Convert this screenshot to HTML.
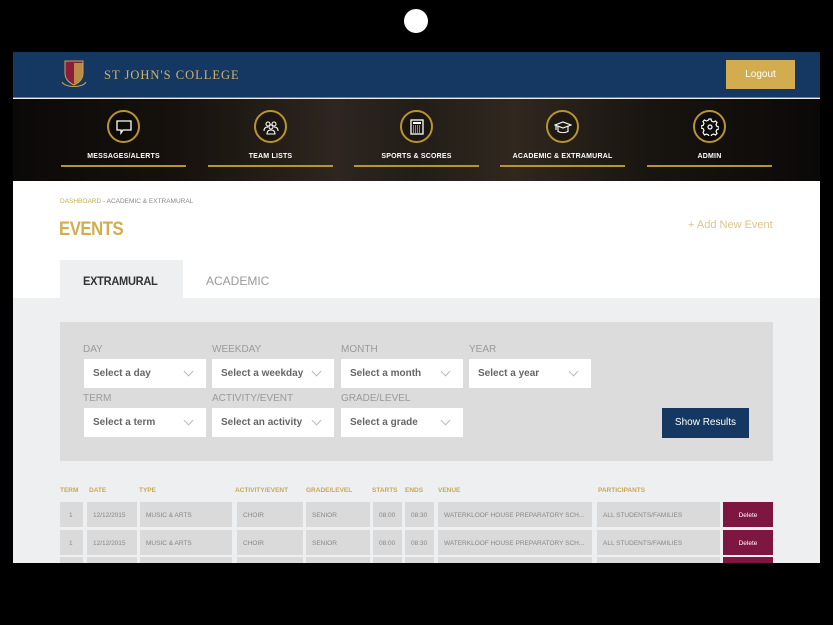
<!DOCTYPE html>
<html><head><meta charset="utf-8"><style>
*{margin:0;padding:0;box-sizing:border-box}
body{width:833px;height:625px;background:#000;position:relative;overflow:hidden;font-family:"Liberation Sans",sans-serif}
.a{position:absolute}
.screen{left:13px;top:52px;width:807px;height:511px;background:#eeeff1;overflow:hidden}
.hdr{left:0;top:0;width:807px;height:46px;background:#143861;border-bottom:1px solid #8a7a4a}
.nav{left:0;top:47px;width:807px;height:82px;background:linear-gradient(90deg,#0b0908 0%,#16110d 20%,#2e261f 40%,#221d18 50%,#30281f 62%,#17130f 80%,#0b0908 100%)}
.ni{position:absolute;top:0;width:125px;height:82px;text-align:center}
.ni .c{position:absolute;left:46px;top:11px;width:33px;height:33px;border:2px solid #b8952e;border-radius:50%;background:rgba(0,0,0,.25)}
.ni .c svg{position:absolute;left:6px;top:6px}
.ni .l{position:absolute;left:0;top:54px;width:125px;font-size:7px;font-weight:bold;color:#fff;letter-spacing:.2px}
.ni .u{position:absolute;left:0;top:66px;width:125px;height:2px;background:#b8952e}
.white{left:0;top:129px;width:807px;height:117px;background:#fff}
.lbl{font-size:10px;color:#9a9a9a}
.sel{position:absolute;width:122px;height:29px;background:#fff;font-size:10px;font-weight:bold;color:#666;padding:9px 0 0 9px}
.sel:after{content:"";position:absolute;right:14px;top:9px;width:6px;height:6px;border-right:1px solid #bbb;border-bottom:1px solid #bbb;transform:rotate(45deg)}
.th{position:absolute;top:435px;font-size:6.5px;color:#c9a94e;font-weight:bold}
.td{position:absolute;height:25px;background:#dadada;font-size:6.5px;color:#888;padding-top:10px;padding-left:6px;white-space:nowrap;overflow:hidden}
.del{position:absolute;height:25px;background:#7d1640;color:#fff;font-size:6.5px;text-align:center;padding-top:10px}
</style></head><body>
<div class="a" style="left:404px;top:9px;width:24px;height:24px;border-radius:50%;background:#fff"></div>
<div class="a screen">
 <div class="a hdr">
  <svg class="a" style="left:48px;top:8px" width="30" height="30" viewBox="0 0 30 30"><path d="M4 1h18v12c0 7-5 10-9 12-4-2-9-5-9-12z" fill="#8b1d3a" stroke="#c7a64e"/><path d="M13 3h9v10c0 6-4 9-9 11z" fill="#c7a64e" opacity=".8"/><path d="M1 22c3 6 21 6 24 0" stroke="#c7a64e" fill="none"/></svg>
  <div class="a" style="left:91px;top:16px;color:#d1b36a;font-family:'Liberation Serif',serif;font-size:12.5px;letter-spacing:1px">ST JOHN'S COLLEGE</div>
  <div class="a" style="left:713px;top:8px;width:69px;height:29px;background:#d2ac4f;color:#fff;font-size:10px;text-align:center;padding-top:9px">Logout</div>
 </div>
 <div class="a nav">
  <div class="ni" style="left:48px"><div class="c"><svg width="18" height="18" viewBox="0 0 18 18"><path d="M2 3h14v9H8l-2 3v-3H2z" fill="none" stroke="#fff" stroke-width="1.3"/></svg></div><div class="l">MESSAGES/ALERTS</div><div class="u"></div></div>
  <div class="ni" style="left:195px"><div class="c"><svg width="18" height="18" viewBox="0 0 18 18" fill="none" stroke="#fff" stroke-width="1.1"><circle cx="6" cy="6" r="2"/><circle cx="12" cy="6" r="2"/><circle cx="9" cy="9" r="2"/><path d="M2 13c0-3 2-4 4-4M16 13c0-3-2-4-4-4M5 16c0-3 2-4 4-4s4 1 4 4z"/></svg></div><div class="l">TEAM LISTS</div><div class="u"></div></div>
  <div class="ni" style="left:341px"><div class="c"><svg width="18" height="18" viewBox="0 0 18 18"><rect x="3" y="2" width="12" height="14" fill="none" stroke="#fff" stroke-width="1.3"/><rect x="5" y="4" width="8" height="2" fill="#fff"/><path d="M5 8h8M5 10h8M5 12h8M5 14h8" stroke="#fff" stroke-dasharray="1 1"/></svg></div><div class="l">SPORTS &amp; SCORES</div><div class="u"></div></div>
  <div class="ni" style="left:487px"><div class="c"><svg width="18" height="18" viewBox="0 0 18 18" fill="none" stroke="#fff" stroke-width="1.1"><path d="M1 7l8-3 8 3-8 3z"/><path d="M4 8.5v5c3 1.5 7 1.5 10 0v-5M2 7v5"/></svg></div><div class="l">ACADEMIC &amp; EXTRAMURAL</div><div class="u"></div></div>
  <div class="ni" style="left:634px"><div class="c"><svg width="18" height="18" viewBox="0 0 18 18" fill="none" stroke="#fff" stroke-width="1.2"><circle cx="9" cy="9" r="2"/><path d="M8 1h2l.5 2 2 1 2-1 1.5 1.5-1 2 1 2 2 .5v2l-2 .5-1 2 1 2-1.5 1.5-2-1-2 1-.5 2H8l-.5-2-2-1-2 1L2 14.5l1-2-1-2-2-.5V8l2-.5 1-2-1-2L3.5 2l2 1 2-1z"/></svg></div><div class="l">ADMIN</div><div class="u"></div></div>
 </div>
 <div class="a white">
  <div class="a" style="left:47px;top:17px;font-size:6.5px;color:#888"><span style="color:#c9a94e">DASHBOARD</span> - ACADEMIC &amp; EXTRAMURAL</div>
  <div class="a" style="left:46px;top:38px;font-size:19px;font-weight:bold;color:#d2ac4f;letter-spacing:-.5px;transform:scaleX(.88);transform-origin:left">EVENTS</div>
  <div class="a" style="left:675px;top:38px;font-size:11px;color:#ddc48a">+ Add New Event</div>
  <div class="a" style="left:47px;top:79px;width:123px;height:38px;background:#eeeff1"></div>
  <div class="a" style="left:70px;top:93px;font-size:12px;font-weight:bold;color:#333;letter-spacing:-.3px;transform:scaleX(.92);transform-origin:left">EXTRAMURAL</div>
  <div class="a" style="left:193px;top:93px;font-size:12px;color:#999">ACADEMIC</div>
 </div>
 <div class="a" style="left:47px;top:270px;width:713px;height:139px;background:#dcdcdc">
  <div class="a lbl" style="left:23px;top:22px">DAY</div>
  <div class="a lbl" style="left:152px;top:22px">WEEKDAY</div>
  <div class="a lbl" style="left:281px;top:22px">MONTH</div>
  <div class="a lbl" style="left:409px;top:22px">YEAR</div>
  <div class="sel" style="left:24px;top:37px">Select a day</div>
  <div class="sel" style="left:152px;top:37px">Select a weekday</div>
  <div class="sel" style="left:281px;top:37px">Select a month</div>
  <div class="sel" style="left:409px;top:37px">Select a year</div>
  <div class="a lbl" style="left:23px;top:71px">TERM</div>
  <div class="a lbl" style="left:152px;top:71px">ACTIVITY/EVENT</div>
  <div class="a lbl" style="left:281px;top:71px">GRADE/LEVEL</div>
  <div class="sel" style="left:24px;top:86px">Select a term</div>
  <div class="sel" style="left:152px;top:86px">Select an activity</div>
  <div class="sel" style="left:281px;top:86px">Select a grade</div>
  <div class="a" style="left:602px;top:86px;width:87px;height:30px;background:#143861;color:#fff;font-size:10px;text-align:center;padding-top:9px">Show Results</div>
 </div>
 <div class="th" style="left:47px">TERM</div><div class="th" style="left:76px">DATE</div><div class="th" style="left:126px">TYPE</div><div class="th" style="left:222px">ACTIVITY/EVENT</div><div class="th" style="left:293px">GRADE/LEVEL</div><div class="th" style="left:359px">STARTS</div><div class="th" style="left:392px">ENDS</div><div class="th" style="left:425px">VENUE</div><div class="th" style="left:585px">PARTICIPANTS</div>
 <div class="td" style="left:47px;top:450px;width:23px;padding-left:9px">1</div><div class="td" style="left:74px;top:450px;width:50px">12/12/2015</div><div class="td" style="left:127px;top:450px;width:92px">MUSIC &amp; ARTS</div><div class="td" style="left:224px;top:450px;width:66px">CHOIR</div><div class="td" style="left:293px;top:450px;width:64px">SENIOR</div><div class="td" style="left:360px;top:450px;width:29px">08:00</div><div class="td" style="left:392px;top:450px;width:29px">08:30</div><div class="td" style="left:425px;top:450px;width:154px">WATERKLOOF HOUSE PREPARATORY SCH...</div><div class="td" style="left:584px;top:450px;width:123px">ALL STUDENTS/FAMILIES</div><div class="del" style="left:710px;top:450px;width:50px">Delete</div>
 <div class="td" style="left:47px;top:478px;width:23px;padding-left:9px">1</div><div class="td" style="left:74px;top:478px;width:50px">12/12/2015</div><div class="td" style="left:127px;top:478px;width:92px">MUSIC &amp; ARTS</div><div class="td" style="left:224px;top:478px;width:66px">CHOIR</div><div class="td" style="left:293px;top:478px;width:64px">SENIOR</div><div class="td" style="left:360px;top:478px;width:29px">08:00</div><div class="td" style="left:392px;top:478px;width:29px">08:30</div><div class="td" style="left:425px;top:478px;width:154px">WATERKLOOF HOUSE PREPARATORY SCH...</div><div class="td" style="left:584px;top:478px;width:123px">ALL STUDENTS/FAMILIES</div><div class="del" style="left:710px;top:478px;width:50px">Delete</div>
 <div class="td" style="left:47px;top:505px;width:23px"></div><div class="td" style="left:74px;top:505px;width:50px"></div><div class="td" style="left:127px;top:505px;width:92px"></div><div class="td" style="left:224px;top:505px;width:66px"></div><div class="td" style="left:293px;top:505px;width:64px"></div><div class="td" style="left:360px;top:505px;width:29px"></div><div class="td" style="left:392px;top:505px;width:29px"></div><div class="td" style="left:425px;top:505px;width:154px"></div><div class="td" style="left:584px;top:505px;width:123px"></div><div class="del" style="left:710px;top:505px;width:50px"></div>
</div>
</body></html>
